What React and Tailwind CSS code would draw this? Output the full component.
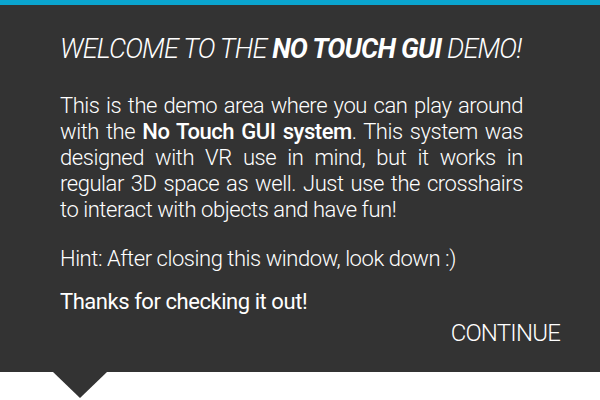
import React from 'react';

const App = () => {
  return (
    <div className="w-[600px] h-[400px] bg-white" style={{ fontFamily: 'Roboto, "Liberation Sans", sans-serif' }}>
      {/* Accent bar */}
      <div className="h-[5px] bg-[#0aa5cf]" />

      {/* Dialog panel */}
      <div className="h-[367px] bg-[#333333] pl-[60px] pr-[77px] pt-[27px] text-white">
        <h1 className="text-[27px] leading-[34px] italic font-light tracking-[-0.8px] whitespace-nowrap">
          WELCOME TO THE <span className="font-bold">NO TOUCH GUI</span> DEMO!
        </h1>

        <p className="mt-[27px] text-[22px] leading-[26px] font-light tracking-[-0.45px] text-justify">
          This is the demo area where you can play around with the{' '}
          <span className="font-medium">No Touch GUI system</span>. This system was designed with VR use in mind, but it
          works in regular 3D space as well. Just use the crosshairs to interact with objects and have fun!
        </p>

        <p className="mt-[23px] text-[22px] leading-[26px] font-light tracking-[-0.45px]">
          Hint: After closing this window, look down :)
        </p>

        <p className="mt-[17px] text-[22px] leading-[26px] font-normal tracking-[-0.45px]">Thanks for checking it out!</p>

        <div className="flex justify-end -mr-[37px] mt-[3px]">
          <button className="text-[24px] leading-[30px] font-light tracking-[-0.8px] text-white">CONTINUE</button>
        </div>
      </div>

      {/* Pointer triangle */}
      <div className="ml-[53px] w-0 h-0 border-l-[27px] border-r-[27px] border-t-[26px] border-l-transparent border-r-transparent border-t-[#333333]" />
    </div>
  );
};

export default App;
